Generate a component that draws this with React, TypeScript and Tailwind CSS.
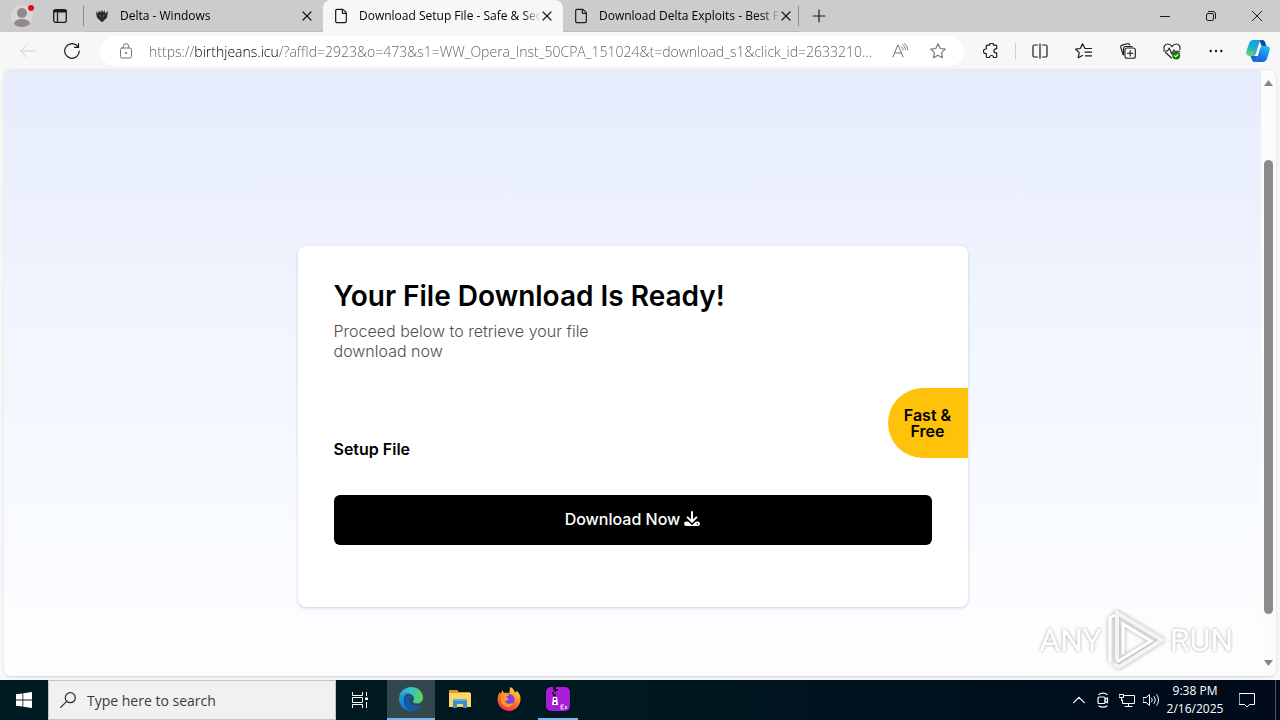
// Desktop view: browser window with a download page, plus the taskbar below it

import { useState } from "react";
import type { ReactNode } from "react";
import { File as FileIcon, Plus, X } from "lucide-react";

type TabInfo = { id: number; title: string; icon: "bug" | "file" };

const TABS: TabInfo[] = [
  { id: 1, title: "Delta - Windows", icon: "bug" },
  { id: 2, title: "Download Setup File - Safe & Sec", icon: "file" },
  { id: 3, title: "Download Delta Exploits - Best Fr", icon: "file" },
];

const URL_TEXT =
  "https://birthjeans.icu/?affId=2923&o=473&s1=WW_Opera_Inst_50CPA_151024&t=download_s1&click_id=2633210...";

const ICON = {
  fill: "none",
  stroke: "currentColor",
  strokeLinecap: "round" as const,
  strokeLinejoin: "round" as const,
};

/* ─── Tab strip ─── */

function ProfileIcon() {
  return (
    <svg width="26" height="26" viewBox="0 0 26 26">
      <circle cx="12" cy="13" r="11" fill="#d9d6d4" />
      <circle cx="12" cy="10" r="5" fill="#8f8b89" />
      <path d="M4 21c0-3 3.500-5 8-5s8 2 8 5c-2 2-5 3-8 3s-6-1-8-3z" fill="#8f8b89" />
      <circle cx="21" cy="5" r="3" fill="#e00b1c" />
    </svg>
  );
}

function WorkspaceIcon() {
  return (
    <svg width="14" height="14" viewBox="0 0 14 14" {...ICON} strokeWidth="1.300">
      <rect x="0.700" y="0.700" width="12.600" height="12.600" rx="2" />
      <path d="M1 2.200h12" strokeWidth="2.400" />
      <path d="M4.500 4v9" />
    </svg>
  );
}

function BugIcon() {
  return (
    <svg width="16" height="14" viewBox="-1 0 16 14" fill="#2b2b2b" className="shrink-0">
      <path d="M1 2l1.800 2.500L4 1.500 5.500 3.500 7 1l1.500 2.500L9.500 1l.8 3.500L13 2l-.6 4-.4 2.500-2 2L7.500 13h-1L4 10.500 2 8.500 1.500 6z" />
      <path d="M4.500 6.500l1.500.8M9.500 6.500L8 7.300" stroke="#8c8c8c" />
    </svg>
  );
}

function Tab({ tab, active, onSelect }: { tab: TabInfo; active: boolean; onSelect: () => void }) {
  return (
    <div
      className={
        active
          ? "flex h-8 w-60 shrink-0 items-center rounded-t-lg bg-[#f7f7f7] pr-[10px]"
          : "flex h-8 w-[239px] shrink-0 items-center border-b border-[#bdbdbd] pr-[10px]"
      }
    >
      <button type="button" onClick={onSelect} className="flex min-w-0 flex-1 items-center gap-[10px] pl-[10px]">
        {tab.icon === "bug" ? (
          <BugIcon />
        ) : (
          <FileIcon className="h-4 w-4 shrink-0 text-[#1b1b1b]" strokeWidth={1.800} />
        )}
        <span className="min-w-0 flex-1 overflow-hidden text-left text-xs whitespace-nowrap text-black [mask-image:linear-gradient(to_right,#000_90%,transparent)]">
          {tab.title}
        </span>
      </button>
      <button type="button" aria-label="Close tab" className="flex h-4 w-3 items-center justify-center">
        <X className="h-4 w-4 shrink-0" strokeWidth={1.800} />
      </button>
    </div>
  );
}

function TabStrip() {
  const [current, setCurrent] = useState(2);

  return (
    <header className="flex h-8 items-center bg-[#cccccc] text-[#1b1b1b]">
      <div className="flex w-[83px] shrink-0 items-center gap-[17px] pl-[10px]">
        <button type="button" aria-label="Profile">
          <ProfileIcon />
        </button>
        <button type="button" aria-label="Workspaces">
          <WorkspaceIcon />
        </button>
      </div>
      <div className="h-5 w-px bg-[#8a8a8a]" />
      {TABS.map((tab) => (
        <Tab key={tab.id} tab={tab} active={tab.id === current} onSelect={() => setCurrent(tab.id)} />
      ))}
      <div className="-ml-1 h-5 w-px bg-[#8a8a8a]" />
      <button type="button" aria-label="New tab" className="flex w-10 justify-center">
        <Plus className="h-5 w-5" strokeWidth={1.400} />
      </button>

      <div className="ml-auto flex">
        <button type="button" aria-label="Minimize" className="flex h-8 w-[46px] items-center justify-center">
          <svg width="10" height="10" viewBox="0 0 10 10" {...ICON}>
            <path d="M0 5.500h10" />
          </svg>
        </button>
        <button type="button" aria-label="Restore" className="flex h-8 w-[46px] items-center justify-center">
          <svg width="10" height="10" viewBox="0 0 10 10" {...ICON}>
            <rect x="0.500" y="2.500" width="7" height="7" rx="1.500" />
            <path d="M2.500.5H7A2.500 2.500 0 0 1 9.500 3v4.500" />
          </svg>
        </button>
        <button type="button" aria-label="Close" className="flex h-8 w-[46px] items-center justify-center">
          <svg width="10" height="10" viewBox="0 0 10 10" {...ICON}>
            <path d="M0 0l10 10M10 0L0 10" />
          </svg>
        </button>
      </div>
    </header>
  );
}

/* ─── Toolbar ─── */

function ToolButton({ label, children }: { label: string; children: ReactNode }) {
  return (
    <button type="button" aria-label={label} className="flex h-9 w-11 shrink-0 items-center justify-center">
      {children}
    </button>
  );
}

function Toolbar() {
  return (
    <nav className="flex h-[38px] items-center bg-[#f7f7f7] pr-[2px] pl-[6px] text-[#1b1b1b]">
      <ToolButton label="Back">
        <svg width="16" height="14" viewBox="0 0 16 14" {...ICON} className="text-[#cfcfcf]">
          <path d="M15.500 7H.7M7 .7L.7 7 7 13.300" />
        </svg>
      </ToolButton>
      <ToolButton label="Refresh">
        <svg width="16" height="16" viewBox="0 0 16 16" {...ICON} strokeWidth="1.200">
          <path d="M15.300 8A7.300 7.300 0 1 1 12.600 2.300L14.500 4.200M14.500.5v3.900h-3.900" />
        </svg>
      </ToolButton>

      <div className="ml-[6px] flex h-[30px] min-w-0 flex-1 items-center rounded-full bg-white pl-5 text-[#757575]">
        <svg width="12" height="16" viewBox="0 0 12 16" {...ICON} className="shrink-0">
          <rect x="0.500" y="5" width="11" height="10" rx="1.500" />
          <path d="M3.300 5V3.300a2.700 2.700 0 0 1 5.400 0V5" />
          <circle cx="6" cy="10" r="0.600" fill="currentColor" />
        </svg>
        <input
          type="text"
          aria-label="Address"
          defaultValue={URL_TEXT}
          className="ml-[17px] h-7 min-w-0 flex-1 bg-[linear-gradient(to_right,#5c5c5c_45px,#000_45px,#000_130px,#5c5c5c_130px)] bg-clip-text text-sm font-light text-transparent outline-none"
        />
        <button type="button" aria-label="Read aloud" className="flex w-9 justify-center">
          <svg width="17" height="16" viewBox="0 0 17 16" {...ICON}>
            <path d="M1 14L5.800 2h.4L11 14M2.800 10h6.400M9.500 3.800c1 .8 1.500 1.800 1.600 3M10.800 1.800c1.700 1.200 2.600 2.800 2.700 5M12.300.5C14.600 2 15.700 4.200 15.800 7" />
          </svg>
        </button>
        <button type="button" aria-label="Add to favorites" className="mr-[6px] flex w-10 justify-center">
          <svg width="16" height="16" viewBox="0 0 16 16" {...ICON} strokeWidth="1.100">
            <path d="M8 .8l2.200 4.700 5.100.6-3.800 3.500 1 5.100L8 12.200l-4.500 2.500 1-5.100L.7 6.100l5.100-.6z" />
          </svg>
        </button>
      </div>

      <div className="flex items-center pl-[5px]">
        <ToolButton label="Extensions">
          <svg width="16" height="16" viewBox="0 0 16 16" {...ICON} strokeWidth="1.200">
            <path d="M3.300 5V3.200a1 1 0 0 1 1-1h2.200a2 2 0 1 1 4 0h2.200a1 1 0 0 1 1 1v2.600h-.8a2 2 0 0 0 0 4h.8v3.700a1 1 0 0 1-1 1h-2.200a2 2 0 0 0-4 0H4.300a1 1 0 0 1-1-1v-3H2.700a2.200 2.200 0 0 1 0-4.500h.6z" />
          </svg>
        </ToolButton>
        <div className="mx-[2px] h-4 w-px bg-[#cfcfcf]" />
        <ToolButton label="Split screen">
          <svg width="16" height="16" viewBox="0 0 16 16" {...ICON} strokeWidth="1.200">
            <path d="M5.500 2H2.500A1.500 1.500 0 0 0 1 3.500v9A1.500 1.500 0 0 0 2.500 14h3M10.500 2h3A1.500 1.500 0 0 1 15 3.500v9a1.500 1.500 0 0 1-1.500 1.500h-3M8 .8v14.400" />
          </svg>
        </ToolButton>
        <ToolButton label="Favorites">
          <svg width="18" height="16" viewBox="0 0 18 16" {...ICON} strokeWidth="1.200">
            <path d="M16.500 5.500H10L7.500.8 5.300 5.500l-4.600.7 3.500 3.400-1 5.200 4.300-2.300M10 9.200h6.500M10.500 12.800h6" />
          </svg>
        </ToolButton>
        <ToolButton label="Collections">
          <svg width="16" height="16" viewBox="0 0 16 16" {...ICON} strokeWidth="1.100">
            <rect x="5" y="5" width="10.300" height="10.300" rx="2" />
            <path d="M10.200 7.500v5.500M7.500 10.200H13M3 11.500L.8 4.500a2 2 0 0 1 1.300-2.400L7.300.7a2 2 0 0 1 2.400 1.300M3.500 12V5.500a2 2 0 0 1 2-2H12" />
          </svg>
        </ToolButton>
        <ToolButton label="Browser essentials">
          <svg width="18" height="17" viewBox="0 0 18 17" {...ICON} strokeWidth="1.100">
            <path d="M1.200 6.500C.3 3.500 2 1 4.700 1 6.500 1 8 2 9 3.600 10 2 11.500 1 13.300 1c2.700 0 4.400 2.500 3.500 5.500M2.500 9.500L8.500 15M.5 8h4l1.800-3 2.500 6 2-4 1 1.200h5" />
            <circle cx="13.200" cy="12.500" r="4" fill="#107c10" stroke="none" />
            <path d="M11.500 12.700l1.200 1.100 2.300-2.500" stroke="#fff" />
          </svg>
        </ToolButton>
        <ToolButton label="Settings and more">
          <svg width="14" height="4" viewBox="0 0 14 4" fill="currentColor">
            <circle cx="1.700" cy="2" r="1.200" />
            <circle cx="7" cy="2" r="1.200" />
            <circle cx="12.300" cy="2" r="1.200" />
          </svg>
        </ToolButton>
        <button type="button" aria-label="Copilot" className="flex h-9 w-10 items-center justify-center">
          <svg width="24" height="22" viewBox="0 0 24 22">
            <defs>
              <linearGradient id="copilotA" x1="0.600" y1="0" x2="0.200" y2="1">
                <stop offset="0" stopColor="#129cf0" />
                <stop offset="0.500" stopColor="#1fb0c8" />
                <stop offset="1" stopColor="#6fd46c" />
              </linearGradient>
              <linearGradient id="copilotB" x1="0.800" y1="0" x2="0.300" y2="1">
                <stop offset="0" stopColor="#27c3ee" />
                <stop offset="0.600" stopColor="#1480ee" />
                <stop offset="1" stopColor="#1a5fe0" />
              </linearGradient>
            </defs>
            <path d="M13 0h3.500c1.500 0 2.300 1 2.700 2.400L20.300 6h-4.500z" fill="#0d4f9e" />
            <path d="M7.500 0h8c-1.500.5-2 2-2.600 4L10 13.500C9.300 15.500 8.600 16 7 16H3.500C.8 16-.3 14 .3 11.500L3 3.500C3.800 1.200 5 0 7.500 0z" fill="url(#copilotA)" />
            <path d="M16.500 22h-8c1.500-.5 2-2 2.600-4L14 8.500C14.700 6.500 15.400 6 17 6h3.500c2.700 0 3.800 2 3.200 4.500L21 18.500c-.8 2.300-2 3.500-4.500 3.500z" fill="url(#copilotB)" />
            <path d="M4.500 16H7c1.600 0 2.300-.5 3-2.500L12.200 6H17c-1.600 0-2.300.5-3 2.500L11.100 18c-.6 2-1.300 3.500-2.600 4-1.500 0-2.300-1-2.700-2.500z" fill="#1565dd" />
            <path d="M12.200 6H17c-1.600 0-2.300.5-3 2.500L11.800 16H7c1.600 0 2.300-.5 3-2.500z" fill="#fff" />
          </svg>
        </button>
      </div>
    </nav>
  );
}

/* ─── Page ─── */

function DownloadCard() {
  return (
    <section className="relative mx-auto w-full max-w-[670px] rounded-lg bg-white px-9 pt-8 pb-[62px] shadow-[0_1px_3px_rgba(60,60,110,0.25)]">
      <h1 className="text-[28px] leading-9 font-semibold text-black">Your File Download Is Ready!</h1>
      <p className="mt-[7px] max-w-72 text-base leading-5 font-light text-[#4f4f4f]">
        Proceed below to retrieve your file download now
      </p>
      <p className="mt-[78px] text-base leading-5 font-semibold text-black">Setup File</p>
      <button
        type="button"
        className="mt-9 flex h-[50px] w-full items-center justify-center gap-1 rounded-md bg-black pb-[2px] text-base font-medium text-white"
      >
        Download Now
        <svg width="16" height="16" viewBox="0 0 16 16" fill="none">
          <path d="M2.300 12.800h11.400" stroke="#fff" strokeWidth="4.400" strokeLinecap="round" />
          <path d="M3.200 6.500L8 11.300l4.800-4.800" stroke="#000" strokeWidth="4.200" />
          <path d="M8 1v9.500M3.600 6.400L8 10.800l4.400-4.400" stroke="#fff" strokeWidth="2" strokeLinecap="round" strokeLinejoin="round" />
          <circle cx="13.300" cy="13" r="0.700" fill="#000" />
        </svg>
      </button>
      <p className="absolute top-[142px] right-0 flex h-[70px] w-20 items-center justify-center rounded-l-full bg-[#ffc20a] px-4 text-center text-base leading-4 font-semibold text-black">
        Fast & Free
      </p>
    </section>
  );
}

function ScrollBar() {
  return (
    <div className="flex w-[15px] shrink-0 flex-col items-center bg-[#fcfcfc] py-[10px]" aria-hidden="true">
      <svg width="9" height="6" viewBox="0 0 9 6" fill="#858585">
        <path d="M4.500 0L9 6H0z" />
      </svg>
      <div className="flex w-[9px] flex-1 flex-col">
        <div className="grow-[74]" />
        <div className="grow-[454] rounded-full bg-[#8b8b8b]" />
        <div className="grow-[46]" />
      </div>
      <svg width="9" height="6" viewBox="0 0 9 6" fill="#858585">
        <path d="M4.500 6L9 0H0z" />
      </svg>
    </div>
  );
}

function Watermark() {
  return (
    <div className="absolute right-[43px] bottom-1 flex items-center gap-1 font-['Roboto',sans-serif] text-[32px] leading-none text-white [text-shadow:0_0_3px_#a0a0a0]">
      <span>ANY</span>
      <svg width="60" height="64" viewBox="0 0 60 64" {...ICON} strokeLinecap="butt" strokeLinejoin="miter" className="drop-shadow-[0_0_2px_#a8a8a8]">
        <path d="M4 54V10l5-3" stroke="#fff" strokeWidth="3" />
        <path d="M11 52V5l45 27-43 27-5-3" stroke="#f4f4f4" strokeWidth="4" />
        <path d="M17 46V16l28 17-34 21" stroke="#fff" strokeWidth="3" />
      </svg>
      <span>RUN</span>
    </div>
  );
}

/* ─── Taskbar ─── */

function TaskView() {
  return (
    <svg width="16" height="16" viewBox="0 0 16 16" {...ICON} strokeLinecap="butt" className="text-white">
      <path d="M.5 0v3.500h10V0M.5 16v-3.500h10V16M.5 5.500h10v5H.5zM14.500 0v4M14.500 10v6" />
      <path d="M13 5.500h3v2.500h-3z" fill="currentColor" stroke="none" />
    </svg>
  );
}

function EdgeIcon() {
  return (
    <svg width="24" height="24" viewBox="0 0 24 24">
      <defs>
        <linearGradient id="edgeTop" x1="0" y1="0.500" x2="1" y2="0.500">
          <stop offset="0" stopColor="#2aa6e6" />
          <stop offset="0.500" stopColor="#35c1c8" />
          <stop offset="1" stopColor="#62d64c" />
        </linearGradient>
        <linearGradient id="edgeLow" x1="0" y1="0" x2="0.500" y2="1">
          <stop offset="0" stopColor="#1f9fe4" />
          <stop offset="1" stopColor="#1373c4" />
        </linearGradient>
      </defs>
      <path d="M0 11C.5 5 5.500 0 12 0c7 0 12 5 12 10.500 0 4-3 6-6 6-2.500 0-4-1-4-2s1-1.300 1-3c0-2.500-2.800-5-6.500-5C4.500 6.500 1 8 0 11z" fill="url(#edgeTop)" />
      <path d="M0 11c1-3 4-4.800 8.500-4.500C5.500 8 4.500 11 5 15c.7 5 4.500 8 8.500 8.800C6 25 0 19 0 11z" fill="url(#edgeLow)" />
      <path d="M8.500 9C11 7.200 14 8.500 15 11c-1-.8-2.800-.7-3.700.5-1.500 2-.3 6.500 4.700 7.300 3 .4 5-.3 6.500-1-1.800 3.500-5 6-9 6C8 23.500 5.500 19 5.500 15c0-2.500 1-4.700 3-6z" fill="#0f5ba8" />
    </svg>
  );
}

function ExplorerIcon() {
  return (
    <svg width="22" height="18" viewBox="0 0 22 18">
      <path d="M0 0h8l2 2h11v4H0z" fill="#e09a1f" />
      <path d="M0 3h22v14H0z" fill="#fbd668" />
      <path d="M4 10h14v8h-4v-4H8v4H4z" fill="#3b8fcb" />
      <path d="M5 9h12v2H5z" fill="#57b1e8" />
    </svg>
  );
}

function FirefoxIcon() {
  return (
    <svg width="24" height="24" viewBox="0 0 24 24">
      <defs>
        <linearGradient id="foxFlame" x1="0.800" y1="0" x2="0.300" y2="1">
          <stop offset="0" stopColor="#ffe23e" />
          <stop offset="0.450" stopColor="#ff8a1f" />
          <stop offset="1" stopColor="#f5245f" />
        </linearGradient>
      </defs>
      <path d="M13.500 0c3 1.500 4 4 4.300 5.500 1.200-.3 1.700-1 1.900-1.800C22.500 6 23.700 9 23.500 12.500 23.200 19 18 24 12 24S.5 19 .5 12.500c0-3 1-5.500 2.500-7.500l.5 2 2-4 1.500 3c2-.5 4 0 5.500 0 0-2.500.2-4.500 1-6z" fill="url(#foxFlame)" />
      <circle cx="12" cy="12.500" r="5.500" fill="#7a3ff0" />
      <path d="M5 8c3-2 6-.8 7.500.5-1.500.2-2.500 1-3.500 2 2 .5 2.800 1.200 2.500 2-1 1.200-2.300 1-3.500 1.500C9 17 13 18 16 15.500c-1 4-5 5.500-8 4C4 17.500 3 12 5 8z" fill="#ff9c22" />
    </svg>
  );
}

function ArchiveIcon() {
  return (
    <svg width="24" height="24" viewBox="0 0 24 24">
      <rect width="24" height="24" rx="5" fill="#a61fd6" />
      <path d="M7 0h3v2h2v2h-2v1H8v2h2v2H7V7H6V5h2V3H7z" fill="#2d0b3d" />
      <path d="M7 10h4l1 8H6z" fill="#fff" />
      <path d="M8 11h2v2H8zM8 15h2v2H8z" fill="#7b1a9e" />
      <path d="M15 18h3M15 20h2M15 22h3M15 18v4M19 19l2 3M21 19l-2 3" stroke="#f0d4fa" fill="none" />
    </svg>
  );
}

const APPS = [
  { label: "Microsoft Edge", icon: EdgeIcon, style: "border-b-2 border-[#76b9ed] bg-[#33474f]" },
  { label: "File Explorer", icon: ExplorerIcon, style: "border-b-2 border-transparent" },
  { label: "Firefox", icon: FirefoxIcon, style: "border-b-2 border-transparent" },
];

function Taskbar() {
  return (
    <footer className="flex h-10 shrink-0 items-center bg-[linear-gradient(to_right,#001a22,#001820_50%,#000a1b)] text-white">
      <button type="button" aria-label="Start" className="flex h-10 w-12 items-center justify-center">
        <svg width="16" height="16" viewBox="0 0 16 16" fill="#fff">
          <path d="M0 2.300l6.500-.9v6.200H0zM7.300 1.300L16 0v7.600H7.300zM0 8.400h6.500v6.200L0 13.700zM7.300 8.400H16V16l-8.700-1.300z" />
        </svg>
      </button>
      <label className="flex h-10 w-72 items-center gap-[11px] border border-[#c4c4c4] bg-[#f1f1f1] pl-[11px] text-[#2b2b2b]">
        <svg width="16" height="16" viewBox="0 0 16 16" {...ICON} strokeWidth="1.200" className="shrink-0">
          <circle cx="10.300" cy="5.700" r="5" />
          <path d="M6.700 9.300L.7 15.300" />
        </svg>
        <input
          type="text"
          aria-label="Search"
          placeholder="Type here to search"
          className="h-8 min-w-0 flex-1 bg-transparent text-sm outline-none placeholder:text-[#3b3b3b]"
        />
      </label>
      <button type="button" aria-label="Task view" className="mr-[3px] flex h-10 w-12 items-center justify-center">
        <TaskView />
      </button>
      <div className="flex gap-px">
        {APPS.map((app) => (
          <button
            key={app.label}
            type="button"
            aria-label={app.label}
            className={`flex h-10 w-12 items-center justify-center ${app.style}`}
          >
            <app.icon />
          </button>
        ))}
        <button type="button" aria-label="Setup" className="ml-1 flex h-10 w-10 items-center justify-center border-b-2 border-[#76b9ed]">
          <ArchiveIcon />
        </button>
      </div>

      <div className="ml-auto flex h-10 items-center">
        <button type="button" aria-label="Show hidden icons" className="flex w-6 justify-center">
          <svg width="12" height="8" viewBox="0 0 12 8" {...ICON} strokeWidth="1.200">
            <path d="M.7 6.700L6 1.300l5.300 5.400" />
          </svg>
        </button>
        <button type="button" aria-label="Meet now" className="flex w-6 justify-center">
          <svg width="12" height="16" viewBox="0 0 12 16" {...ICON} strokeWidth="1.200">
            <rect x="1" y="5" width="7" height="6.500" rx="1" />
            <path d="M8 7.500l2.500-1.700v5L8 9.200M2 2.500C4 .7 8 .7 10 2.500M2 14c2 1.600 6 1.600 8 0" />
          </svg>
        </button>
        <button type="button" aria-label="Network" className="flex w-6 justify-center">
          <svg width="16" height="15" viewBox="0 0 16 15" {...ICON} strokeLinejoin="miter">
            <path d="M5.500 2.500h10v8h-12V7M9.500 10.500v3M6 13.500h7M.5 1.500h4v3h-4zM2.500 4.500v3" />
          </svg>
        </button>
        <button type="button" aria-label="Volume" className="flex w-6 justify-center">
          <svg width="17" height="14" viewBox="0 0 17 14" {...ICON}>
            <path d="M.5 4.500h2.700L6.500 1.500v11l-3.300-3H.5zM8.500 5c1 1.200 1 2.800 0 4M11 3.500c1.700 2 1.700 5 0 7M13.500 1.500c2.800 3 2.800 8 0 11" />
          </svg>
        </button>
        <div className="w-16 text-center text-xs leading-[18px] whitespace-nowrap">
          <p>9:38 PM</p>
          <p>2/16/2025</p>
        </div>
        <button type="button" aria-label="Notifications" className="flex w-10 justify-center">
          <svg width="16" height="16" viewBox="0 0 16 16" {...ICON} strokeLinejoin="miter">
            <path d="M.5 1.500h15v11h-5L8 15l-2.500-2.500h-5z" />
          </svg>
        </button>
        <div className="ml-2 h-10 w-px bg-[#4a5561]" />
        <div className="w-1" />
      </div>
    </footer>
  );
}

export default function App() {
  return (
    <div className="flex h-screen flex-col overflow-hidden bg-[#f7f7f7] font-['Open_Sans','Noto_Sans',sans-serif]">
      <TabStrip />
      <Toolbar />
      <div className="relative mx-1 mb-[3px] flex min-h-0 flex-1 overflow-hidden rounded-lg border-b border-[#dcdcdc] shadow-[0_0_2px_#c8c8c8]">
        <main className="min-w-0 flex-1 overflow-hidden bg-[linear-gradient(to_bottom,#e7ecfd,#f3f7fe_50%,#fdfeff)] pt-44 font-['Inter',sans-serif]">
          <DownloadCard />
        </main>
        <ScrollBar />
        <Watermark />
      </div>
      <Taskbar />
    </div>
  );
}
